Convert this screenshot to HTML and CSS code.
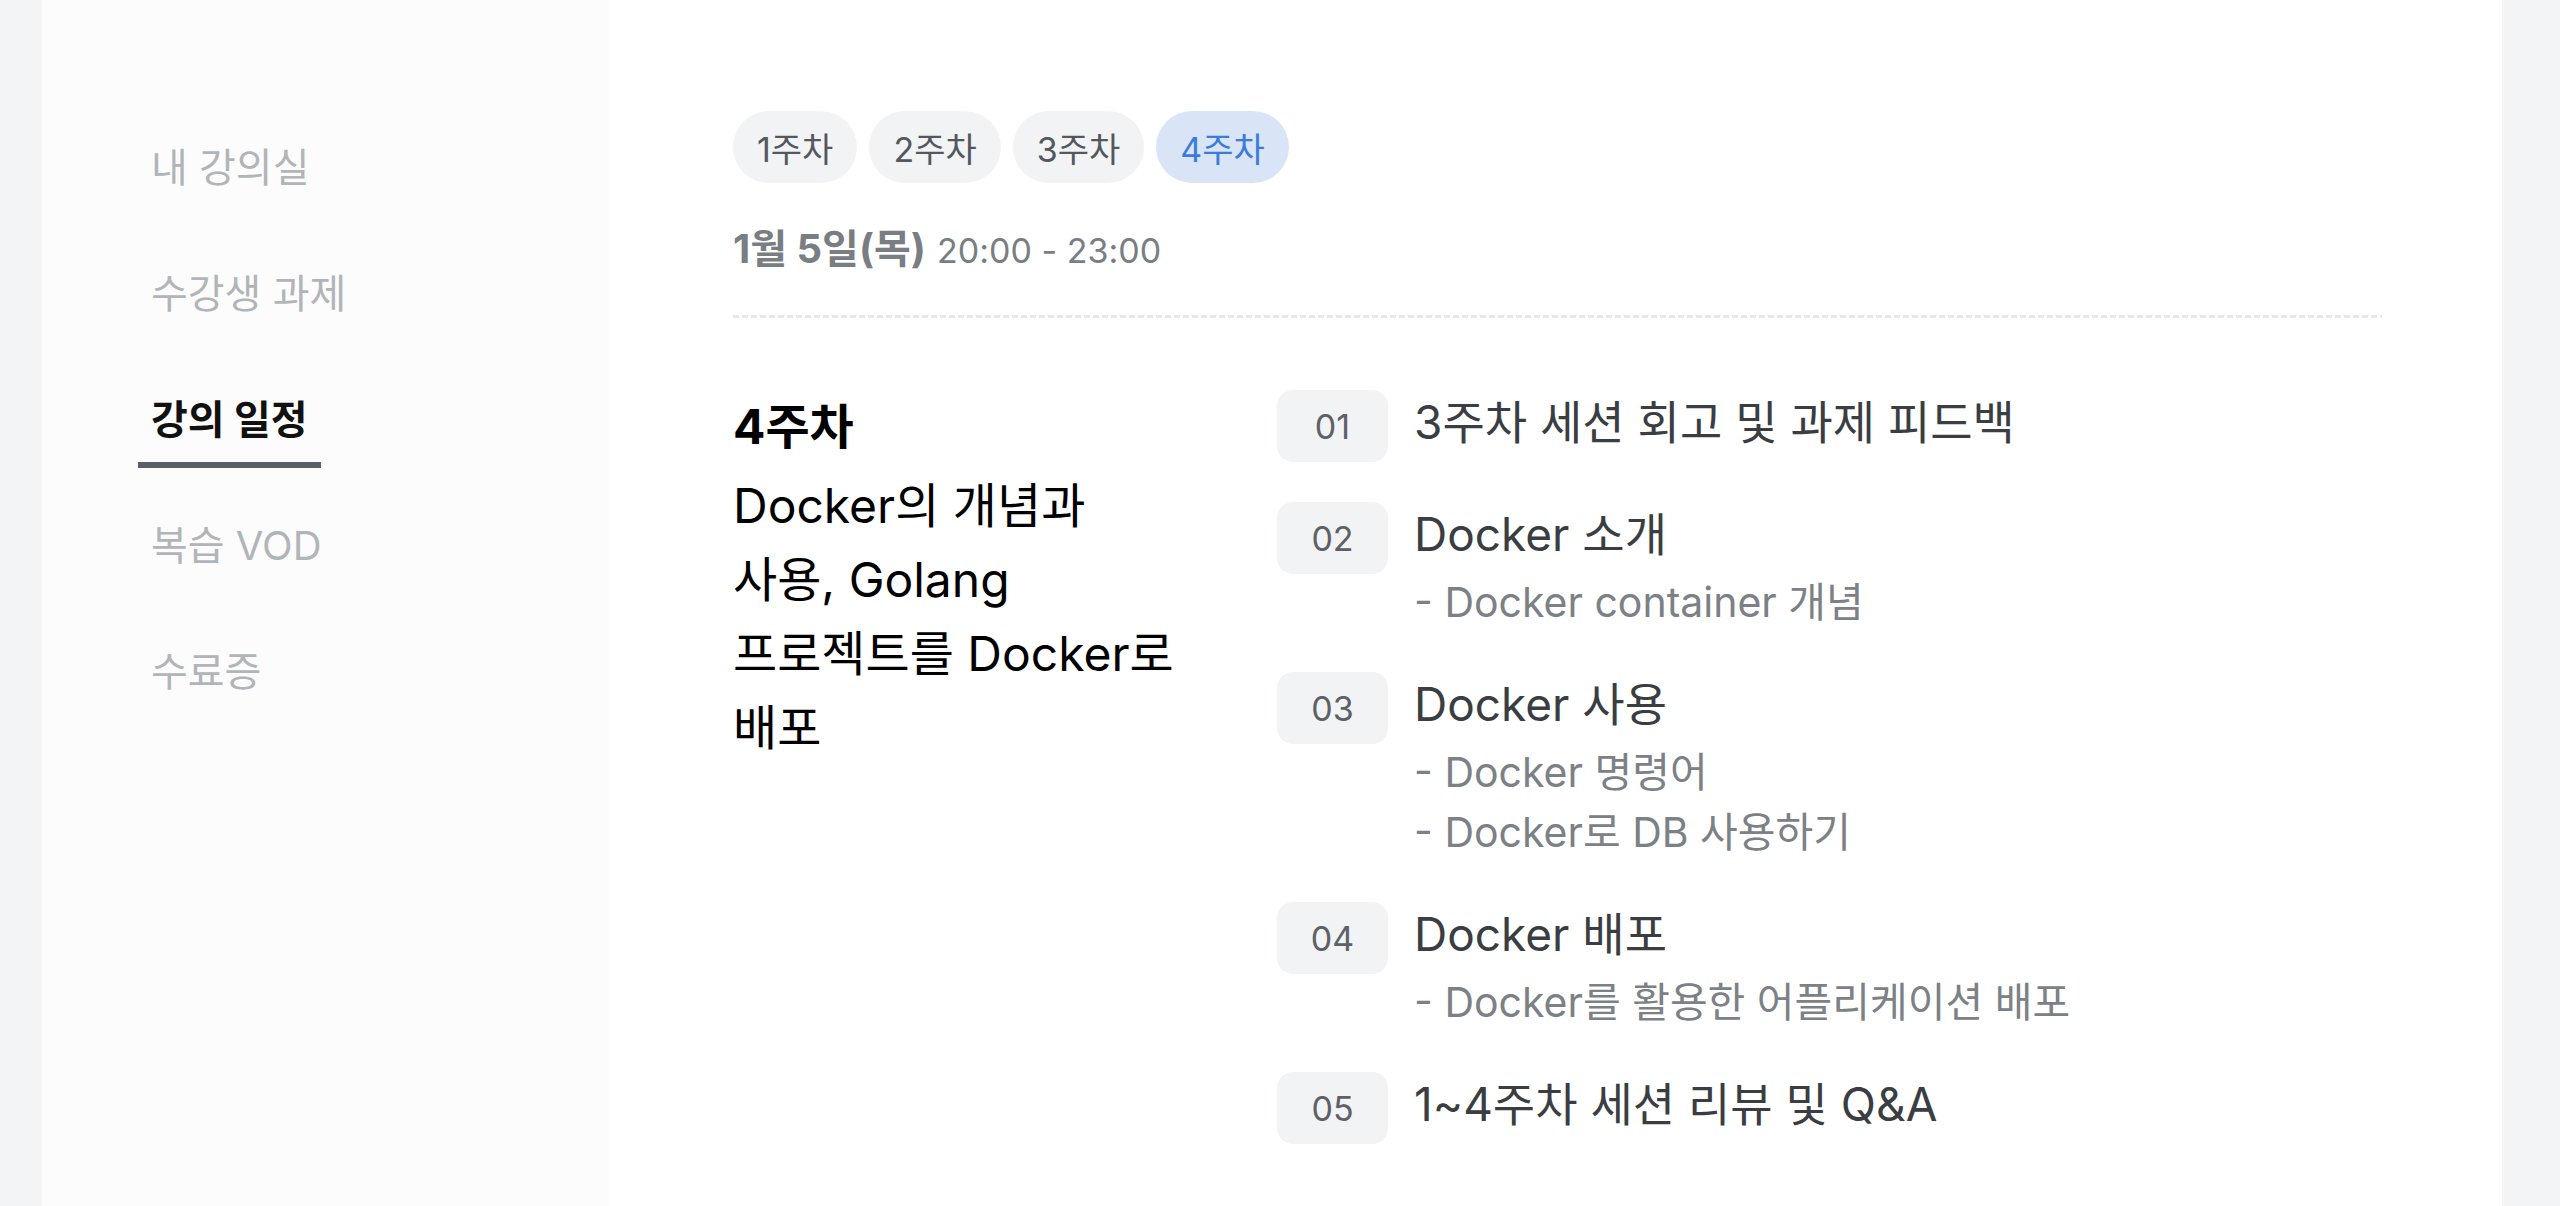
FILE: index.html
```html
<!DOCTYPE html>
<html lang="ko">
<head>
    <meta charset="UTF-8">
    <meta name="viewport" content="width=device-width, initial-scale=1.0">
    <title>강의 일정</title>
    <link rel="stylesheet" href="styles.css">
</head>
<body>
    <div class="page">
        <aside class="sidebar">
            <nav class="side-nav">
                <a class="nav-item" href="#">내 강의실</a>
                <a class="nav-item" href="#">수강생 과제</a>
                <a class="nav-item active" href="#">강의 일정</a>
                <a class="nav-item" href="#">복습 VOD</a>
                <a class="nav-item" href="#">수료증</a>
            </nav>
        </aside>

        <main class="content">
            <div class="week-tabs">
                <button class="week-tab">1주차</button>
                <button class="week-tab">2주차</button>
                <button class="week-tab">3주차</button>
                <button class="week-tab active">4주차</button>
            </div>

            <div class="session-date">
                <strong>1월 5일(목)</strong> <span class="session-time">20:00 - 23:00</span>
            </div>

            <div class="divider"></div>

            <section class="session">
                <div class="session-summary">
                    <strong class="summary-week">4주차</strong>
                    <p class="summary-text">Docker의 개념과 사용, Golang 프로젝트를 Docker로 배포</p>
                </div>

                <ol class="curriculum">
                    <li class="curriculum-item">
                        <span class="item-num">01</span>
                        <div class="item-body">
                            <p class="item-title">3주차 세션 회고 및 과제 피드백</p>
                        </div>
                    </li>
                    <li class="curriculum-item">
                        <span class="item-num">02</span>
                        <div class="item-body">
                            <p class="item-title">Docker 소개</p>
                            <ul class="item-subs">
                                <li>- Docker container 개념</li>
                            </ul>
                        </div>
                    </li>
                    <li class="curriculum-item">
                        <span class="item-num">03</span>
                        <div class="item-body">
                            <p class="item-title">Docker 사용</p>
                            <ul class="item-subs">
                                <li>- Docker 명령어</li>
                                <li>- Docker로 DB 사용하기</li>
                            </ul>
                        </div>
                    </li>
                    <li class="curriculum-item">
                        <span class="item-num">04</span>
                        <div class="item-body">
                            <p class="item-title">Docker 배포</p>
                            <ul class="item-subs">
                                <li>- Docker를 활용한 어플리케이션 배포</li>
                            </ul>
                        </div>
                    </li>
                    <li class="curriculum-item">
                        <span class="item-num">05</span>
                        <div class="item-body">
                            <p class="item-title">1~4주차 세션 리뷰 및 Q&amp;A</p>
                        </div>
                    </li>
                </ol>
            </section>
        </main>
    </div>
</body>
</html>
```

FILE: styles.css
```css
* {
    box-sizing: border-box;
}
body {
    margin: 0;
    font-family: Inter, "Noto Sans CJK KR", sans-serif;
    word-break: keep-all;
    background: #f3f4f6;
    color: #111;
}
.page {
    display: flex;
    width: 2460px;
    min-height: 100vh;
    margin-left: 42px;
}

/* sidebar */
.sidebar {
    width: 567px;
    flex-shrink: 0;
    background: #fcfcfc;
}
.side-nav {
    display: flex;
    flex-direction: column;
    align-items: flex-start;
    gap: 50px;
    padding: 140px 0 0 96px;
}
.nav-item {
    padding: 0 13px 14px;
    font-size: 40px;
    line-height: 56px;
    color: #b1b5b9;
    text-decoration: none;
    border-bottom: 6px solid transparent;
}
.nav-item.active {
    color: #111;
    font-weight: 700;
    border-bottom-color: #5b5f64;
}

/* main */
.content {
    flex: 1;
    background: #fff;
    padding: 111px 120px 0 124px;
}
.week-tabs {
    display: flex;
    gap: 12px;
}
.week-tab {
    height: 72px;
    padding: 0 24px;
    font-family: inherit;
    font-size: 34px;
    color: #54585d;
    background: #f2f3f5;
    border: none;
    border-radius: 36px;
    cursor: pointer;
}
.week-tab.active {
    color: #3a7bdc;
    background: #d9e5f7;
}
.session-date {
    margin-top: 38px;
    font-size: 40px;
    line-height: 56px;
    color: #797e83;
}
.session-time {
    font-size: 34px;
    line-height: 1;
}
.divider {
    height: 3px;
    margin-top: 38px;
    background: repeating-linear-gradient(to right, #e6e8ea 0 6px, transparent 6px 9px);
}

.session {
    display: grid;
    grid-template-columns: 465px 1fr;
    column-gap: 79px;
    margin-top: 72px;
}
.session-summary {
    font-size: 48px;
    line-height: 74px;
    color: #000;
}
.summary-week {
    display: block;
    margin-bottom: 5px;
    font-weight: 700;
}
.summary-text {
    margin: 0;
}

.curriculum {
    display: flex;
    flex-direction: column;
    gap: 40px;
    margin: 0;
    padding: 0;
    list-style: none;
}
.curriculum-item {
    display: flex;
    gap: 26px;
}
.item-num {
    display: flex;
    align-items: center;
    justify-content: center;
    flex-shrink: 0;
    width: 111px;
    height: 72px;
    font-size: 34px;
    color: #5d6166;
    background: #f2f3f5;
    border-radius: 16px;
}
.item-title {
    margin: 0;
    font-size: 46px;
    line-height: 64px;
    color: #3a3d41;
}
.item-subs {
    margin: 6px 0 0;
    padding: 0;
    list-style: none;
    font-size: 41px;
    line-height: 60px;
    color: #7c8186;
}
```
